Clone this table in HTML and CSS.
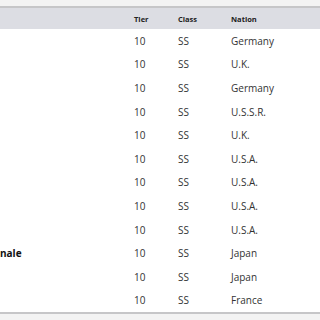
FILE: index.html
```html
<!DOCTYPE html>
<html lang="en">

<head>
    <meta charset="UTF-8">
    <title>Ships</title>
    <link rel="stylesheet" href="styles.css">
</head>

<body>

    <div class="table">
        <div class="row head">
            <div class="name"></div>
            <div>Tier</div>
            <div>Class</div>
            <div>Nation</div>
        </div>
        <div class="row"><div class="name"></div><div>10</div><div>SS</div><div>Germany</div></div>
        <div class="row"><div class="name"></div><div>10</div><div>SS</div><div>U.K.</div></div>
        <div class="row"><div class="name"></div><div>10</div><div>SS</div><div>Germany</div></div>
        <div class="row"><div class="name"></div><div>10</div><div>SS</div><div>U.S.S.R.</div></div>
        <div class="row"><div class="name"></div><div>10</div><div>SS</div><div>U.K.</div></div>
        <div class="row"><div class="name"></div><div>10</div><div>SS</div><div>U.S.A.</div></div>
        <div class="row"><div class="name"></div><div>10</div><div>SS</div><div>U.S.A.</div></div>
        <div class="row"><div class="name"></div><div>10</div><div>SS</div><div>U.S.A.</div></div>
        <div class="row"><div class="name"></div><div>10</div><div>SS</div><div>U.S.A.</div></div>
        <div class="row"><div class="name">nale</div><div>10</div><div>SS</div><div>Japan</div></div>
        <div class="row"><div class="name"></div><div>10</div><div>SS</div><div>Japan</div></div>
        <div class="row"><div class="name"></div><div>10</div><div>SS</div><div>France</div></div>
    </div>

</body>

</html>
```

FILE: styles.css
```css
body,
html {
    margin: 0;
    padding: 0;
    height: 100%;
    background-color: #f3f3f3;
    font-family: "Open Sans", sans-serif;
    overflow: hidden;
}

.table {
    margin-top: 6px;
    border-top: 2px solid #c6c6c8;
    border-bottom: 2px solid #c6c6c8;
    background-color: #fff;
}

.row {
    display: grid;
    grid-template-columns: 134px 44px 53px 1fr;
    align-items: center;
    height: 23.6px;
    font-size: 10px;
    color: #333;
}

.row.head {
    height: 21px;
    background-color: #dcdde3;
    font-size: 7.5px;
    font-weight: bold;
    color: #222;
}

.name {
    font-weight: bold;
    color: #111;
}
```
